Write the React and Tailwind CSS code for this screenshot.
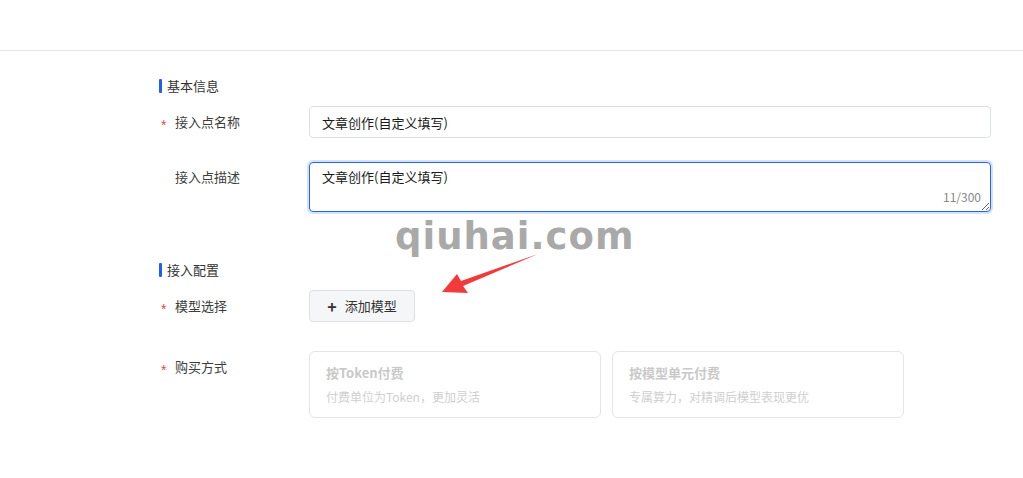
import { useState } from "react";

const FONT = { fontFamily: '"Noto Sans CJK SC", "Noto Sans", sans-serif' };

function SectionTitle({ children, className }) {
  return (
    <div className={"flex items-center h-[20px] " + className}>
      <span className="w-[3px] h-[14px] bg-[#1f5df5] rounded-[1px]" />
      <span className="ml-[5px] text-[13px] text-[#333]">{children}</span>
    </div>
  );
}

function Label({ required, children, top }) {
  return (
    <div
      className={
        "w-[150px] shrink-0 flex text-[13px] text-[#3d3d3d] " +
        (top ? "items-start " + top : "items-center")
      }
    >
      <span
        className="w-[16px] pl-[2px] h-[20px] leading-[20px] relative top-[3px] text-[#e5484d] text-[14px]"
        style={{ fontFamily: '"Liberation Sans", sans-serif' }}
      >
        {required ? "*" : ""}
      </span>
      <span className="leading-[20px]">{children}</span>
    </div>
  );
}

function PayCard({ title, desc }) {
  return (
    <div className="w-[292px] h-[67px] border border-[#e3e5ea] rounded-[6px] px-[16px] pt-[11px]">
      <div className="text-[13px] font-bold text-[#c9c9c9]">{title}</div>
      <div className="mt-[5px] text-[12px] text-[#cfcfcf]">{desc}</div>
    </div>
  );
}

export default function App() {
  const [name, setName] = useState("文章创作(自定义填写)");
  const [desc, setDesc] = useState("文章创作(自定义填写)");

  return (
    <div className="relative w-[1023px] h-[478px] bg-white overflow-hidden" style={FONT}>
      <div className="h-[51px] border-b border-[#e6e6e6]" />

      <div className="pl-[159px] pr-[32px]">
        <SectionTitle className="mt-[25px]">基本信息</SectionTitle>

        <div className="flex mt-[10px]">
          <Label required>接入点名称</Label>
          <input
            className="flex-1 h-[32px] border border-[#dcdfe6] rounded-[4px] px-[12px] text-[13px] text-[#1a1a1a] outline-none"
            value={name}
            onChange={(e) => setName(e.target.value)}
          />
        </div>

        <div className="flex mt-[24px]">
          <Label top="pt-[5px]">接入点描述</Label>
          <div className="relative flex-1">
            <textarea
              className="block w-full h-[50px] border border-[#2563eb] ring-2 ring-[#d5e2fd] rounded-[4px] px-[12px] pt-[4px] text-[13px] text-[#1a1a1a] outline-none"
              value={desc}
              onChange={(e) => setDesc(e.target.value)}
            />
            <span className="absolute right-[10px] bottom-[6px] text-[12px] text-[#888]">
              {desc.length}/300
            </span>
          </div>
        </div>

        <SectionTitle className="mt-[48px]">接入配置</SectionTitle>

        <div className="flex mt-[10px]">
          <Label required>模型选择</Label>
          <button className="h-[32px] w-[106px] flex items-center justify-center gap-[8px] bg-[#f5f6f8] border border-[#dcdfe6] rounded-[4px] text-[13px] text-[#333]">
            <span className="text-[16px] font-bold leading-none">+</span>
            <span>添加模型</span>
          </button>
        </div>

        <div className="flex mt-[29px]">
          <Label required top="pt-[6px]">
            购买方式
          </Label>
          <div className="flex gap-[11px]">
            <PayCard title="按Token付费" desc="付费单位为Token，更加灵活" />
            <PayCard title="按模型单元付费" desc="专属算力，对精调后模型表现更优" />
          </div>
        </div>
      </div>

      <div
        className="absolute left-[395px] top-[218px] text-[37px] font-semibold tracking-[1px] text-[#a9a9a9] leading-none select-none"
        style={{ fontFamily: '"DejaVu Sans", sans-serif' }}
      >
        qiuhai.com
      </div>

      <svg className="absolute left-[440px] top-[253px]" width="100" height="42" viewBox="0 0 100 42">
        <polygon points="2,39 17,21 21,28 98,1 23,33 28,40" fill="#f23a3a" />
      </svg>
    </div>
  );
}
